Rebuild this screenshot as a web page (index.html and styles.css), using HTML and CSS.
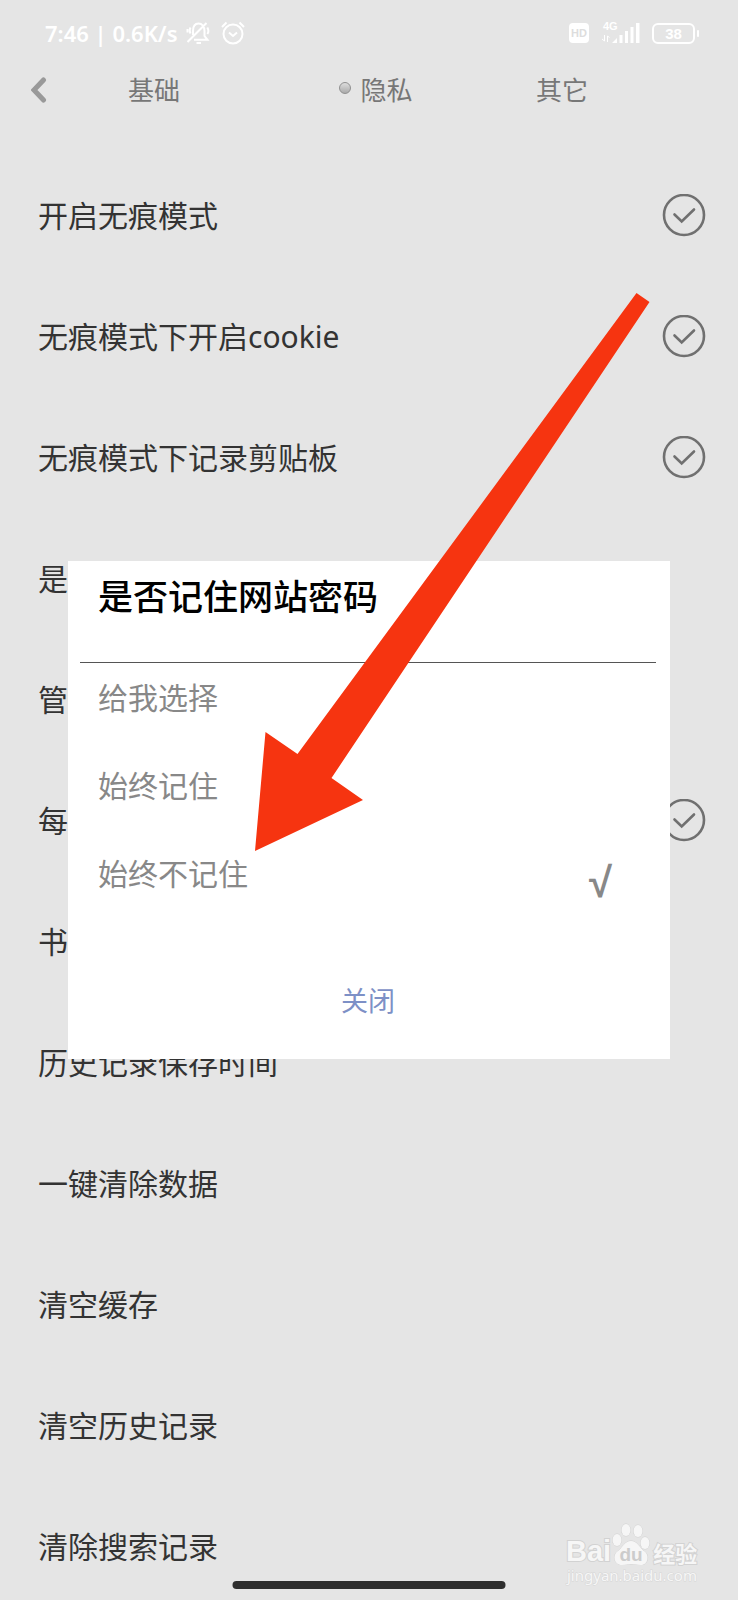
FILE: index.html
```html
<!DOCTYPE html>
<html lang="zh-CN">
<head>
<meta charset="utf-8">
<meta name="viewport" content="width=device-width, initial-scale=1">
<title>隐私</title>
<link rel="stylesheet" href="styles.css">
</head>
<body>
<svg class="defs" aria-hidden="true">
  <symbol id="check" viewBox="0 0 44 44">
    <circle cx="22" cy="21" r="20"/>
    <path d="M12.500 20.500L19.700 27.500L32 15.500"/>
  </symbol>
</svg>
<div class="screen">
  <header class="status">
    <div class="status-group">
      <span class="clock">7:46 | 0.6K/s</span>
      <svg class="bell" viewBox="0 0 24 24" width="24" height="24">
        <path d="M7 14V10C7 5 9 2.500 12.500 2.500C16 2.500 18.500 5.500 18.500 10V15L21.500 18.800H8M10.500 22H15M1.500 21L20.500 2M4.500 6.500C3.500 8.500 3.500 10.500 4.500 12.500M1.500 8V11.500M21.300 6.500C22.800 9 22.800 11 21.300 13"/>
      </svg>
      <svg class="alarm" viewBox="0 0 24 24" width="24" height="24">
        <circle cx="12" cy="13" r="9.500"/>
        <path d="M8 11.500L12 15L16 11.500M1 6L5.500 1.500M23 6L18.500 1.500"/>
      </svg>
    </div>
    <div class="status-group">
      <span class="hd">HD</span>
      <svg class="signal" viewBox="0 0 40 24" width="40" height="24">
        <text x="2" y="9">4G</text>
        <path d="M3.500 14V20L1 18M6.500 21V15L8.500 16.500" class="thin"/>
        <path d="M11 22L16 17V22ZM18.500 14H21.500V22H18.500ZM24 10H27V22H24ZM29.500 6H32.500V22H29.500ZM35 2H38.500V22H35Z"/>
      </svg>
      <span class="battery">38</span>
    </div>
  </header>

  <nav class="tabs">
    <button class="back" type="button" aria-label="返回">
      <svg viewBox="0 0 16 26" width="16" height="26"><path d="M12.500 3L3 13L12.500 23"/></svg>
    </button>
    <button class="tab" type="button">基础</button>
    <button class="tab current" type="button"><span class="dot"></span>隐私</button>
    <button class="tab" type="button">其它</button>
  </nav>

  <main class="settings">
    <label class="row"><span>开启无痕模式</span><span class="tick"><input type="checkbox"><svg><use href="#check"/></svg></span></label>
    <label class="row"><span>无痕模式下开启cookie</span><span class="tick"><input type="checkbox"><svg><use href="#check"/></svg></span></label>
    <label class="row"><span>无痕模式下记录剪贴板</span><span class="tick"><input type="checkbox"><svg><use href="#check"/></svg></span></label>
    <button class="row" type="button">是</button>
    <button class="row" type="button">管</button>
    <label class="row"><span>每</span><span class="tick"><input type="checkbox"><svg><use href="#check"/></svg></span></label>
    <button class="row" type="button">书</button>
    <button class="row" type="button">历史记录保存时间</button>
    <button class="row" type="button">一键清除数据</button>
    <button class="row" type="button">清空缓存</button>
    <button class="row" type="button">清空历史记录</button>
    <button class="row" type="button">清除搜索记录</button>
  </main>

  <section class="dialog" role="dialog" aria-labelledby="dialog-title">
    <h1 class="dialog-title" id="dialog-title">是否记住网站密码</h1>
    <div class="options">
      <button class="option" type="button">给我选择</button>
      <button class="option" type="button">始终记住</button>
      <button class="option" type="button">始终不记住<span class="mark">√</span></button>
    </div>
    <button class="close" type="button">关闭</button>
  </section>

  <svg class="arrow" viewBox="0 0 396 560" aria-hidden="true">
    <path d="M0 558L10.500 439L42.500 461L381.500 0L394.500 9L76.500 485L108 507Z"/>
  </svg>

  <div class="watermark">
    <div class="brand">
      <span class="latin">Bai</span>
      <svg class="paw" viewBox="0 0 40 44" width="40" height="44">
        <g class="pads">
          <ellipse cx="6" cy="19" rx="4.500" ry="6"/>
          <ellipse cx="15" cy="9" rx="4.500" ry="6"/>
          <ellipse cx="27" cy="10" rx="4.500" ry="6"/>
          <ellipse cx="34" cy="22" rx="4.500" ry="6"/>
          <path d="M20 20C14 20 12 26 7 30C1 34 3 44 11 44C15 44 17 43 20 43C24 43 26 44 30 44C37 44 39 34 33 30C28 26 26 20 20 20Z"/>
        </g>
        <text x="20" y="40" text-anchor="middle">du</text>
      </svg>
      <span class="han">经验</span>
    </div>
    <div class="site">jingyan.baidu.com</div>
  </div>
  <div class="home-bar"></div>
</div>
</body>
</html>
```
FILE: styles.css
```css
* { box-sizing: border-box; }

body {
  margin: 0;
  background: #e5e5e5;
  color: #333;
  font-family: "Noto Sans", "Noto Sans CJK SC", sans-serif;
}

button {
  margin: 0;
  padding: 0;
  border: 0;
  background: none;
  color: inherit;
  font: inherit;
  text-align: left;
}

svg { display: block; }

.defs {
  position: absolute;
  width: 0;
  height: 0;
}

.screen {
  position: relative;
  height: 100vh;
  overflow: hidden;
}

.status {
  display: flex;
  justify-content: space-between;
  align-items: center;
  height: 66px;
  padding: 0 35px 0 45px;
  color: #fff;
}

.status-group {
  display: flex;
  align-items: center;
}

.clock {
  margin-right: 8px;
  font-size: 22px;
  font-weight: 600;
  line-height: 32px;
}

.bell, .alarm {
  fill: none;
  stroke: #fff;
  stroke-width: 2;
}

.alarm { margin-left: 11px; }

.hd {
  width: 20px;
  margin-right: 12px;
  border-radius: 4px;
  background: #fff;
  color: #ddd;
  font: bold 11px/20px "Liberation Sans", sans-serif;
  text-align: center;
}

.signal { fill: #fff; }
.signal text { font: bold 11px "Liberation Sans", sans-serif; }
.signal .thin { fill: none; stroke: #fff; }

.battery {
  position: relative;
  width: 43px;
  margin: 0 8px 0 11px;
  border: 2px solid #fff;
  border-radius: 6px;
  font: bold 15px/17px "Liberation Sans", sans-serif;
  text-align: center;
}

.battery::after {
  content: "";
  position: absolute;
  top: 5px;
  right: -6px;
  width: 2px;
  height: 7px;
  border-radius: 1px;
  background: #fff;
}

.tabs {
  display: grid;
  grid-template-columns: 52px 204px 1fr 196px 78px;
  align-items: center;
  height: 48px;
  margin-bottom: 41px;
  color: #777;
  font-size: 26px;
  line-height: 48px;
}

.back {
  justify-self: end;
  margin-right: 5px;
}

.back path {
  fill: none;
  stroke: #999;
  stroke-width: 5;
  stroke-linecap: round;
}

.tab { text-align: center; }

.current {
  display: flex;
  justify-content: center;
  align-items: center;
  gap: 9px;
  padding-left: 32px;
}

.dot {
  width: 12px;
  height: 12px;
  margin-bottom: 4px;
  border: 1px solid #909090;
  border-radius: 50%;
  background: linear-gradient(#ddd, #aaa);
}

.row {
  display: flex;
  justify-content: space-between;
  align-items: center;
  width: 100%;
  height: 121px;
  padding: 0 32px 0 38px;
  font-size: 30px;
  line-height: 40px;
}

.tick { display: grid; }

.tick input, .tick svg {
  grid-area: 1 / 1;
  width: 44px;
  height: 44px;
  margin: 0;
}

.tick input { appearance: none; }

.tick svg {
  fill: none;
  stroke: #707070;
  stroke-width: 2.6;
  stroke-linecap: round;
  pointer-events: none;
}

.dialog {
  position: absolute;
  top: 561px;
  left: 68px;
  right: 68px;
  padding: 0 14px 38px 12px;
  background: #fff;
}

.dialog-title {
  margin: 0;
  padding: 11px 18px 40px;
  border-bottom: 1px solid #555;
  color: #000;
  font-size: 35px;
  font-weight: 500;
  line-height: 50px;
}

.options {
  display: flex;
  flex-direction: column;
  gap: 48px;
  padding: 15px 44px 87px 18px;
}

.option {
  display: flex;
  justify-content: space-between;
  height: 40px;
  color: #888;
  font-size: 30px;
  line-height: 40px;
}

.mark {
  padding-top: 9px;
  font-family: "Liberation Sans", sans-serif;
  font-size: 42px;
  font-weight: bold;
  line-height: 40px;
}

.close {
  display: block;
  margin: 0 auto;
  color: #7d90c6;
  font-size: 27px;
  line-height: 40px;
}

.arrow {
  position: absolute;
  top: 293px;
  left: 255px;
  width: 396px;
  fill: #f63410;
  pointer-events: none;
}

.watermark {
  position: absolute;
  right: 36px;
  bottom: 15px;
  width: 136px;
  color: #f6f6f6;
  -webkit-text-stroke: 2px #d2d2d2;
  paint-order: stroke fill;
}

.brand {
  display: flex;
  align-items: flex-end;
}

.latin { font: bold 29px/28px "Liberation Sans", sans-serif; }

.paw {
  flex: none;
  -webkit-text-stroke: 0;
}

.pads {
  fill: #f6f6f6;
  stroke: #d2d2d2;
  stroke-width: 1;
}

.paw text {
  fill: #ccc;
  font: bold 19px "Liberation Sans", sans-serif;
}

.han {
  margin-left: 2px;
  font: bold 22px/26px "Noto Sans CJK SC", sans-serif;
  white-space: nowrap;
}

.site {
  padding-left: 1px;
  font-size: 15px;
  line-height: 20px;
  -webkit-text-stroke: 1px #d6d6d6;
}

.home-bar {
  position: absolute;
  bottom: 11px;
  left: 50%;
  width: 273px;
  height: 8px;
  border-radius: 4px;
  background: #2e2e2e;
  transform: translateX(-50%);
}
```
